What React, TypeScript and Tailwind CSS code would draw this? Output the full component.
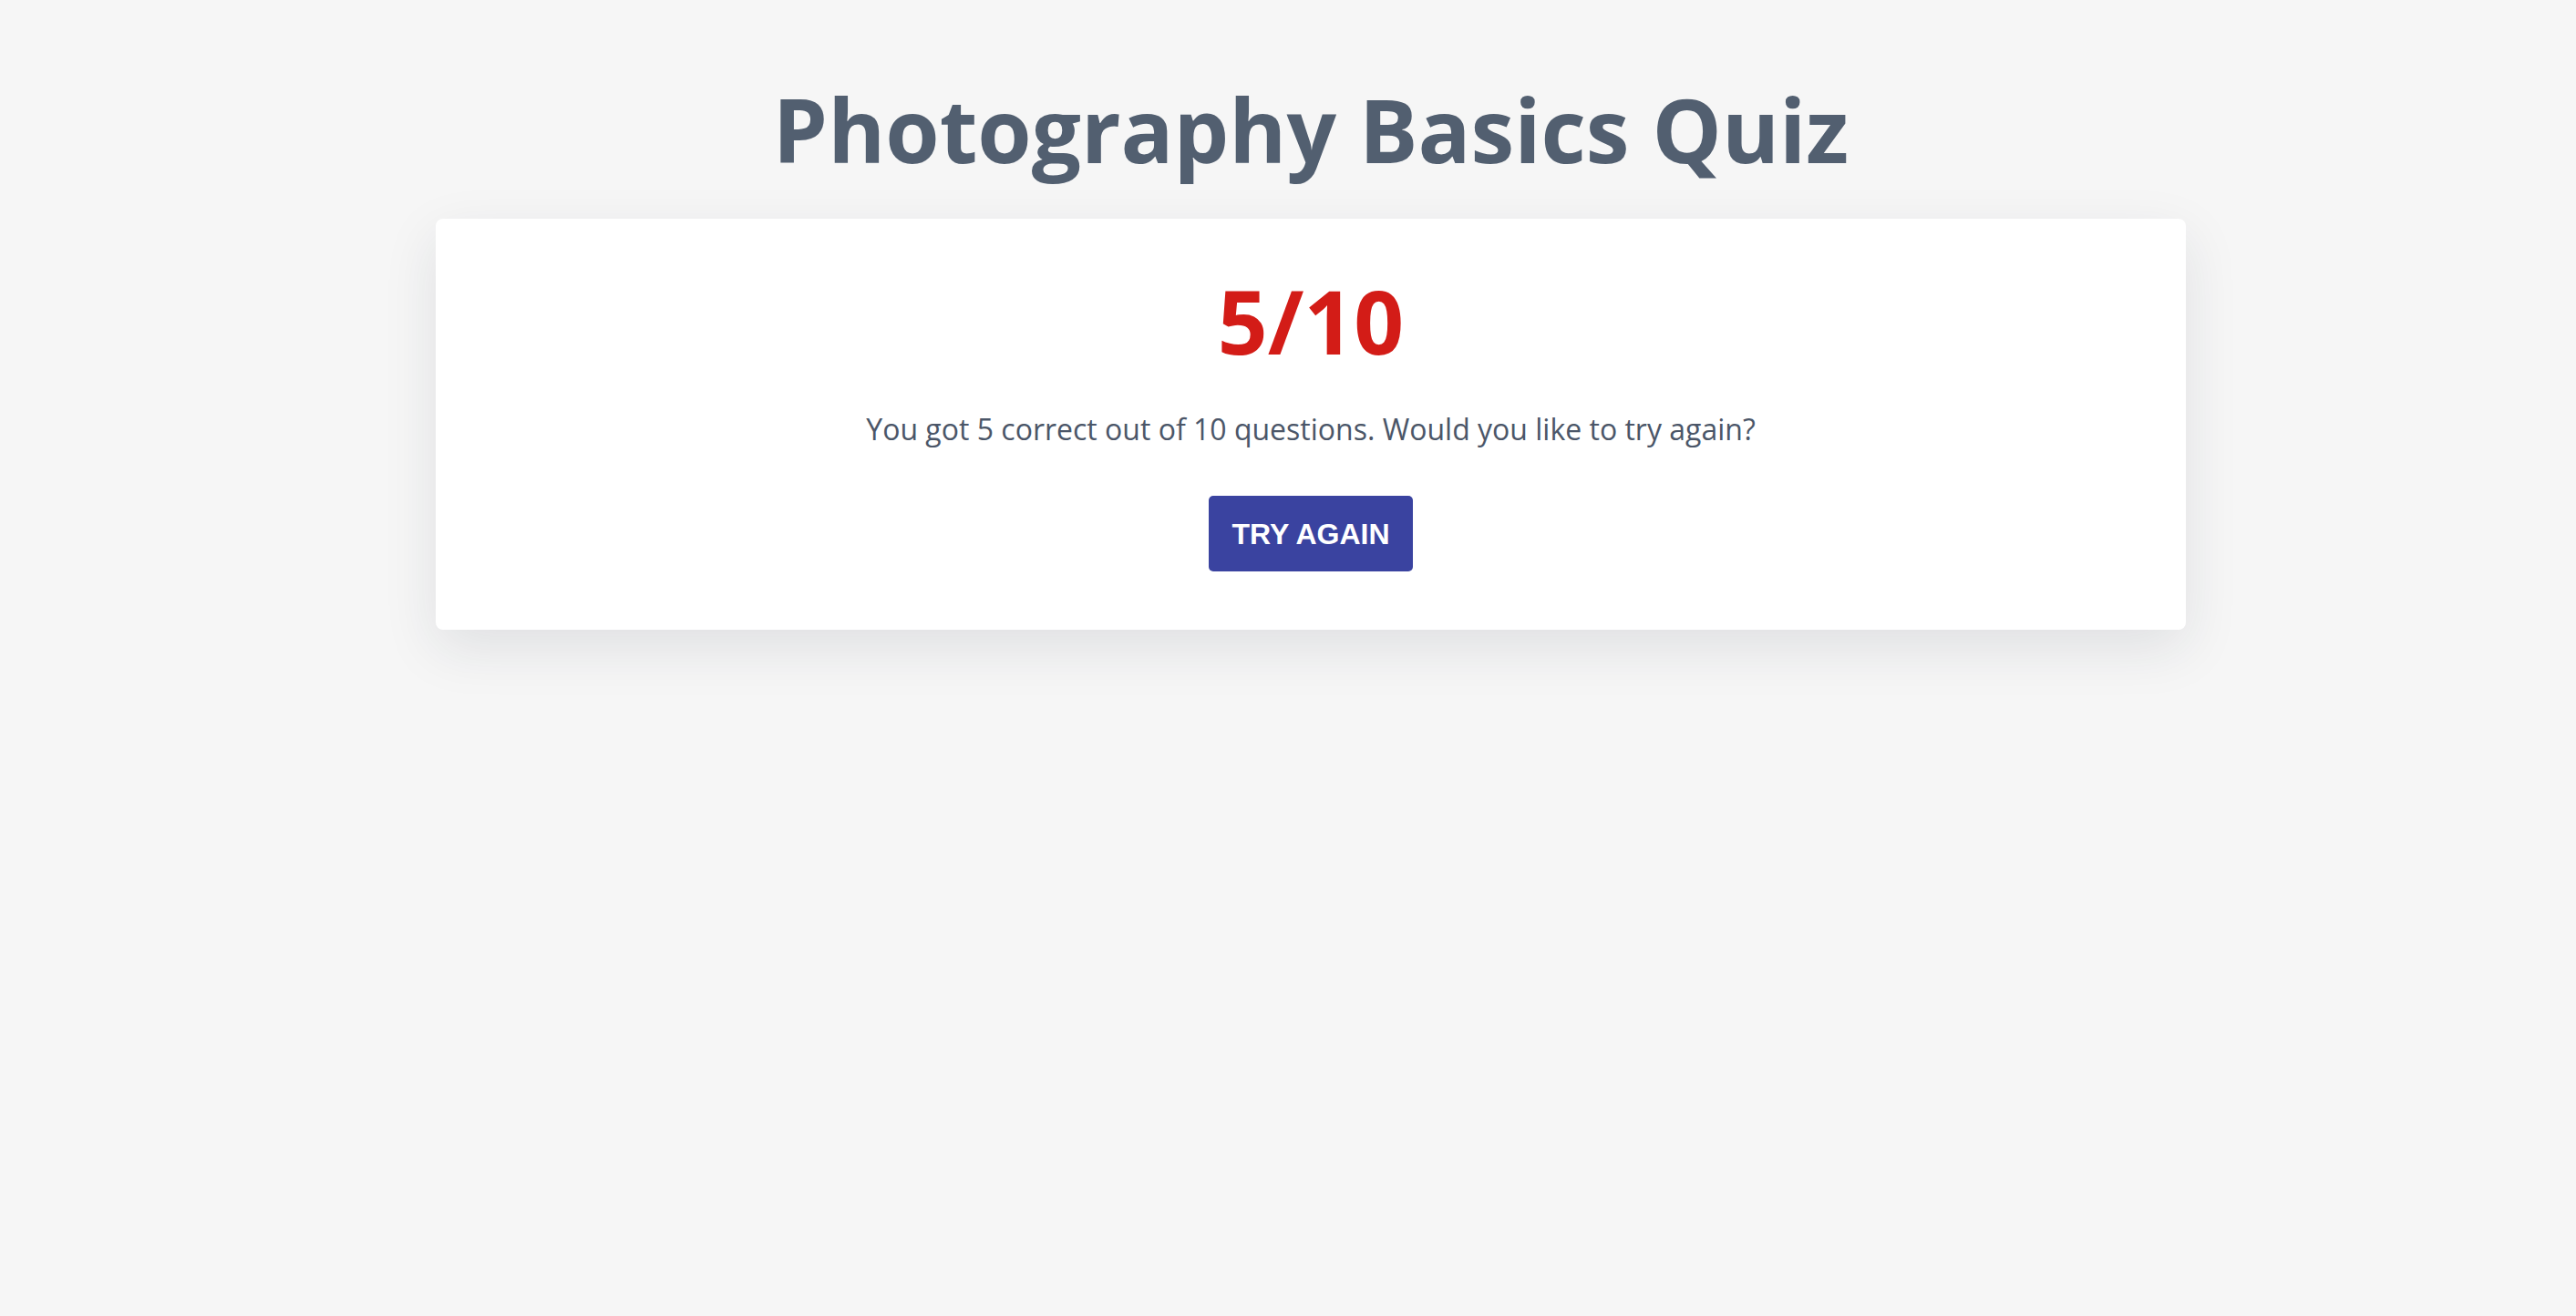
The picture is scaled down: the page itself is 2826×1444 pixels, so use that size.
import React from 'react';

export default function App() {
  const score = 5;
  const total = 10;

  return (
    <div className="min-h-screen w-full bg-[#f6f6f6] pl-[50px] flex flex-col items-center font-['Open_Sans',sans-serif]">
      <h1 className="mt-[94px] mb-[50px] text-[96px] leading-none font-bold text-[#525f70]">
        Photography Basics Quiz
      </h1>
      <div className="w-[1920px] bg-white rounded-lg shadow-[0_20px_60px_rgba(31,41,55,0.1)] p-16 flex flex-col items-center">
        <div className="text-[96px] leading-none font-bold text-[#d31c17]">
          {score}/{total}
        </div>
        <p className="mt-[47px] text-[32px] leading-[48px] text-[#4b5668]">
          You got {score} correct out of {total} questions. Would you like to try again?
        </p>
        <button
          type="button"
          className="mt-[49px] h-[83px] px-[25px] rounded-[5px] bg-[#3a43a0] text-white text-[32px] font-bold font-['Liberation_Sans',Arial,sans-serif]"
        >
          TRY AGAIN
        </button>
      </div>
    </div>
  );
}
